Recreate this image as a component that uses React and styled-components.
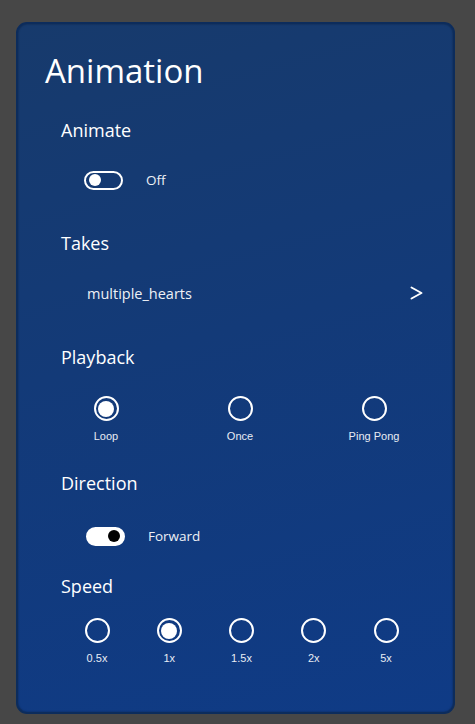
import React from 'react';
import styled, { createGlobalStyle } from 'styled-components';

const Global = createGlobalStyle`
  html, body {
    margin: 0;
    padding: 0;
    background: #474747;
    height: 724px;
    overflow: hidden;
  }
  body {
    font-family: "Open Sans", "Noto Sans", sans-serif;
    color: #f2f4f8;
  }
`;

const Page = styled.div`
  padding: 22px 0 0 16px;
`;

const Panel = styled.div`
  box-sizing: border-box;
  width: 439px;
  height: 692px;
  border: 2px solid #0c2c5c;
  border-radius: 11px;
  background: linear-gradient(165deg, #173a6c 0%, #133a78 45%, #0f3b86 100%);
  padding: 26px 0 0 27px;
  box-shadow: inset 0 0 2px rgba(0, 0, 0, 0.4);
`;

const Title = styled.h1`
  margin: 0;
  font-size: 33px;
  font-weight: 400;
  line-height: 42px;
  color: #ffffff;
`;

const Section = styled.section`
  height: ${({ $h }) => $h}px;
  margin-left: 16px;
  margin-top: ${({ $mt = 0 }) => $mt}px;
`;

const Label = styled.div`
  font-size: 18px;
  line-height: 24px;
  color: #ffffff;
`;

const Row = styled.div`
  display: flex;
  align-items: center;
  height: 24px;
  margin-top: ${({ $mt }) => $mt}px;
  padding-left: ${({ $pl = 0 }) => $pl}px;
`;

const Switch = styled.span`
  box-sizing: border-box;
  position: relative;
  width: 39px;
  height: 19px;
  border-radius: 10px;
  border: 2px solid #ffffff;
  background: ${({ $on }) => ($on ? '#ffffff' : 'transparent')};
  flex: none;

  &::after {
    content: '';
    position: absolute;
    top: 1.5px;
    left: ${({ $on }) => ($on ? '20px' : '3px')};
    width: 12px;
    height: 12px;
    border-radius: 50%;
    background: ${({ $on }) => ($on ? '#000000' : '#ffffff')};
  }
`;

const SwitchText = styled.span`
  margin-left: ${({ $ml }) => $ml}px;
  font-size: 13.5px;
  color: #eef1f6;
`;

const TakeRow = styled.div`
  box-sizing: border-box;
  display: flex;
  align-items: center;
  justify-content: space-between;
  height: 24px;
  margin-top: 26px;
  padding-left: 26px;
  width: 362px;
`;

const TakeName = styled.span`
  font-size: 14.5px;
  color: #eef1f6;
`;

const Chevron = styled.svg`
  width: 13px;
  height: 14px;
  flex: none;
`;

const Options = styled.div`
  display: flex;
  margin-top: ${({ $mt }) => $mt}px;
  margin-left: ${({ $ml }) => $ml}px;
  gap: ${({ $gap }) => $gap}px;
`;

const Option = styled.div`
  width: ${({ $w }) => $w}px;
  display: flex;
  flex-direction: column;
  align-items: center;
`;

const Radio = styled.span`
  box-sizing: border-box;
  width: 25px;
  height: 25px;
  border-radius: 50%;
  border: 2px solid #ffffff;
  display: flex;
  align-items: center;
  justify-content: center;

  &::after {
    content: '';
    display: ${({ $checked }) => ($checked ? 'block' : 'none')};
    width: 16px;
    height: 16px;
    border-radius: 50%;
    background: #ffffff;
  }
`;

const OptionText = styled.span`
  margin-top: 9px;
  font-family: "Liberation Sans", Arial, sans-serif;
  font-size: 11px;
  color: #e8ecf4;
`;

const playback = [
  { name: 'Loop', checked: true },
  { name: 'Once' },
  { name: 'Ping Pong' },
];

const speeds = [
  { name: '0.5x' },
  { name: '1x', checked: true },
  { name: '1.5x' },
  { name: '2x' },
  { name: '5x' },
];

export default function App() {
  return (
    <>
      <Global />
      <Page>
        <Panel>
          <Title>Animation</Title>
          <Section $h={113} $mt={26}>
            <Label>Animate</Label>
            <Row $mt={26} $pl={23}>
              <Switch />
              <SwitchText $ml={23}>Off</SwitchText>
            </Row>
          </Section>
          <Section $h={114}>
            <Label>Takes</Label>
            <TakeRow>
              <TakeName>multiple_hearts</TakeName>
              <Chevron viewBox="0 0 13 14">
                <path d="M1.5 1.5 L11.5 7 L1.5 12.5" fill="none" stroke="#ffffff" strokeWidth="1.9" strokeLinecap="round" strokeLinejoin="round" />
              </Chevron>
            </TakeRow>
          </Section>
          <Section $h={126}>
            <Label>Playback</Label>
            <Options $mt={27} $ml={15} $gap={74}>
              {playback.map((o) => (
                <Option key={o.name} $w={60}>
                  <Radio $checked={o.checked} />
                  <OptionText>{o.name}</OptionText>
                </Option>
              ))}
            </Options>
          </Section>
          <Section $h={103}>
            <Label>Direction</Label>
            <Row $mt={29} $pl={25}>
              <Switch $on />
              <SwitchText $ml={23}>Forward</SwitchText>
            </Row>
          </Section>
          <Section $h={110}>
            <Label>Speed</Label>
            <Options $mt={20} $ml={11} $gap={22.25}>
              {speeds.map((o) => (
                <Option key={o.name} $w={50}>
                  <Radio $checked={o.checked} />
                  <OptionText>{o.name}</OptionText>
                </Option>
              ))}
            </Options>
          </Section>
        </Panel>
      </Page>
    </>
  );
}
